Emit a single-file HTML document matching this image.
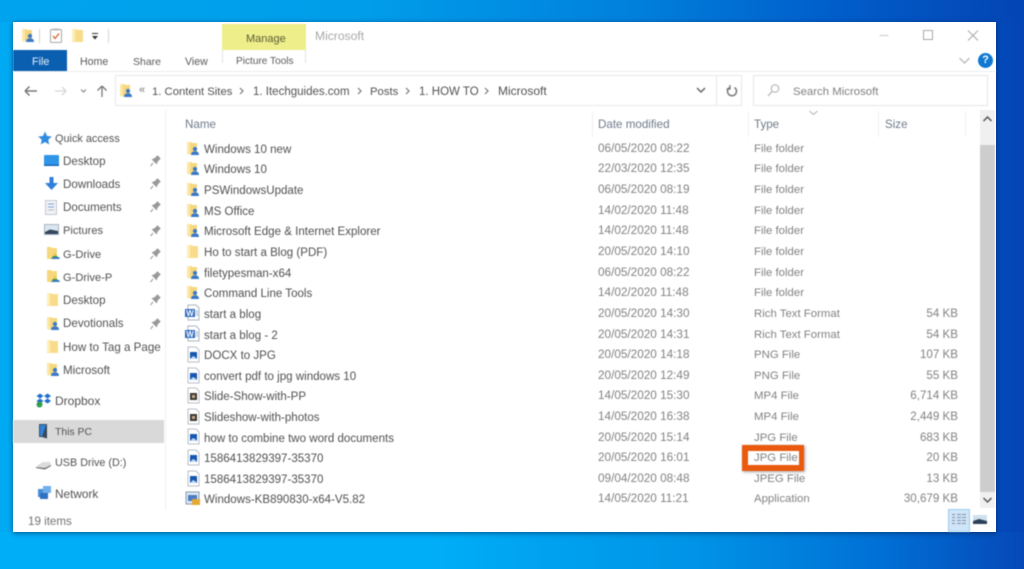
<!DOCTYPE html>
<html><head><meta charset="utf-8">
<style>
html,body{margin:0;padding:0}
body{width:1024px;height:569px;overflow:hidden;position:relative;font-family:"Liberation Sans",sans-serif;font-size:12px;
background:linear-gradient(90deg,#00aaf3 0%,#00a6ef 45%,#0087e2 72%,#0062ce 88%,#0444b4 100%)}
#bot{position:absolute;left:0;top:532px;width:1024px;height:37px;background:linear-gradient(90deg,#00aef7 0%,#00aef7 42%,#0093e6 68%,#0070d6 86%,#0648b8 100%)}
#top{position:absolute;left:0;top:0;width:1024px;height:22px;background:linear-gradient(90deg,#00a4ee 0%,#009eea 35%,#0080dc 62%,#0060cc 80%,#0444b4 100%)}
#win{position:absolute;left:13px;top:22px;width:983px;height:510px;background:#fff;box-shadow:0 1px 5px rgba(0,30,70,.6)}
.a{position:absolute;white-space:nowrap;line-height:14px}
.n{color:#505050;left:204px;font-size:11.55px;margin-top:1px}
.d{color:#828282;left:598px;font-size:11.75px}
.t{color:#828282;left:754px;font-size:11.4px}
.s{color:#828282;right:66px;font-size:11.6px;text-align:right}
.h{color:#6f7a8a;font-size:11.6px;top:118px}
.q{color:#525252;font-size:11.6px;margin-top:1px}
.r{color:#5a5a5a;font-size:10.5px;margin-top:1px}
svg.a{overflow:visible}
#txt{position:absolute;left:0;top:0;width:1024px;height:569px;filter:blur(.4px)}
</style></head><body>
<div id="top"></div><div id="bot"></div><div id="win"></div>
<svg width="0" height="0" style="position:absolute"><defs>
<g id="fu"><path d="M0 1h4l1 1h5v11H0z" fill="#f6d77e"/><path d="M0 1h3v13l-3-1z" fill="#fbe7a8"/><circle cx="8" cy="8" r="2.100" fill="#3a78c8"/><path d="M4 14c0-3 2-3.600 4-3.600s4 .6 4 3.600z" fill="#3a78c8"/></g>
<g id="fp"><path d="M0 1h4l1 1h6v12H0z" fill="#f8dc8c"/><path d="M0 1h3v13l-3-1z" fill="#fdeeb8"/></g>
<g id="fg"><path d="M0 1h4l1 1h5v11H0z" fill="#f6d77e"/><path d="M8 7l4 6H4z" fill="#3d9a4c"/><path d="M8 7l2 3H6z" fill="#f2c63d"/><path d="M5 13l2-2h5l1 2z" fill="#3a78c8"/></g>
<g id="rtf"><path d="M3 0h8l3 3v12H3z" fill="#fff" stroke="#aab4c2"/><rect x="0" y="4" width="10" height="8" fill="#2c69bc"/><text x="1.200" y="11" font-size="8" font-weight="bold" fill="#fff" font-family="Liberation Sans">W</text><path d="M11 6h2M11 8h2M11 10h2" stroke="#8fa7c8"/></g>
<g id="img"><path d="M1 0h8l3 3v12H1z" fill="#fff" stroke="#b8bec7"/><rect x="3" y="5" width="7" height="7" fill="#1656b0"/><path d="M3 12l3-3 2 1 2 2z" fill="#bcd8f4"/></g>
<g id="vid"><path d="M1 0h8l3 3v12H1z" fill="#fff" stroke="#b8bec7"/><rect x="3" y="5" width="7" height="7" fill="#3c3833"/><rect x="5" y="7" width="3" height="3" fill="#c9a98a"/></g>
<g id="pin"><path d="M3 8l-2.500 3M2.500 4.500l4 4 1-2.500L10 3.500 7.500 1 5 3.500z" fill="#999" stroke="#999"/></g>
</defs></svg>
<div id="txt">
<!-- ribbon -->
<div class="a" style="left:222px;top:24px;width:84px;height:26px;background:#eeee8a"></div>
<div class="a" style="left:222px;top:50px;width:84px;height:13px;border-left:1px solid #e2e2e2;border-right:1px solid #e2e2e2;box-sizing:border-box"></div>
<div class="a" style="left:13px;top:50px;width:54px;height:22px;background:#0a5fb0"></div>
<div class="a" style="left:13px;top:71px;width:983px;height:1px;background:#ececec"></div>
<svg class="a" style="left:22px;top:28px" width="15" height="15"><use href="#fu"/></svg>
<div class="a" style="left:39px;top:29px;width:1px;height:14px;background:#d4d4d4"></div>
<svg class="a" style="left:50px;top:28px" width="15" height="16"><rect x=".5" y="1.500" width="11" height="13" rx="1" fill="#fdfdfd" stroke="#a8a8a8"/><rect x="3" y=".5" width="6" height="2" fill="#bbb"/><path d="M3 8l2 2.500 4-5" fill="none" stroke="#d8622c" stroke-width="1.300"/></svg>
<svg class="a" style="left:72px;top:28px" width="12" height="15"><use href="#fp"/></svg>
<svg class="a" style="left:91px;top:33px" width="8" height="8"><path d="M1 .5h6" stroke="#333"/><path d="M1 3h6L4 6.500z" fill="#333"/></svg>
<div class="a" style="left:108px;top:29px;width:1px;height:14px;background:#d4d4d4"></div>
<div class="a" style="left:246px;top:32px;color:#5c5c36;font-size:11px">Manage</div>
<div class="a" style="left:315px;top:29px;color:#a8a8a8;font-size:12.1px">Microsoft</div>
<div class="a" style="left:32px;top:55px;color:#e6f0fa;font-size:10.8px">File</div>
<div class="a r" style="left:80px;top:54px;font-size:10.6px">Home</div>
<div class="a r" style="left:133px;top:54px">Share</div>
<div class="a r" style="left:185px;top:54px;font-size:10.6px">View</div>
<div class="a r" style="left:236px;top:54px;font-size:10.1px">Picture Tools</div>
<svg class="a" style="left:880px;top:28px" width="110" height="14"><path d="M-.5 7.500h9" stroke="#c8c8c8"/><rect x="43.500" y="2.500" width="9" height="9" fill="none" stroke="#a8a8a8"/><path d="M88 2.500l10 10M98 2.500l-10 10" stroke="#a8a8a8"/></svg>
<svg class="a" style="left:959px;top:57px" width="12" height="8"><path d="M.5 1l5 5 5-5" fill="none" stroke="#b0b0b0" stroke-width="1.200"/></svg>
<div class="a" style="left:978px;top:53px;width:15px;height:15px;border-radius:50%;background:#0f78d2;color:#fff;font-size:11px;line-height:15px;text-align:center;font-weight:bold">?</div>
<!-- nav -->
<svg class="a" style="left:24px;top:84px" width="90" height="14"><path d="M1 7h12M1 7l4.500-4.500M1 7l4.500 4.500" fill="none" stroke="#777" stroke-width="1.500"/><path d="M31 7h11M42 7l-4-4M42 7l-4 4" fill="none" stroke="#d6d6d6" stroke-width="1.300"/><path d="M57 5.500l2.500 2.500 2.500-2.500" fill="none" stroke="#888" stroke-width="1.200"/><path d="M78 13V2M78 2l-4.500 4.500M78 2l4.500 4.500" fill="none" stroke="#777" stroke-width="1.300"/></svg>
<div class="a" style="left:115px;top:75px;width:627px;height:31px;border:1px solid #eaeaea;box-sizing:border-box"></div>
<div class="a" style="left:716px;top:75px;width:1px;height:31px;background:#eaeaea"></div>
<svg class="a" style="left:120px;top:83px" width="15" height="15"><use href="#fu"/></svg>
<div class="a" style="left:139px;top:83px;color:#777;font-size:11px">«</div>
<div class="a q" style="left:152px;top:84px;font-size:11.3px">1. Content Sites</div>
<div class="a q" style="left:253px;top:84px;font-size:11.5px">1. Itechguides.com</div>
<div class="a q" style="left:370px;top:84px;font-size:11.3px">Posts</div>
<div class="a q" style="left:419px;top:84px;font-size:11.5px">1. HOW TO</div>
<div class="a q" style="left:498px;top:84px;font-size:12px;margin-top:0">Microsoft</div>
<svg class="a" style="left:240px;top:87px" width="300" height="9"><path d="M0 1l3 3-3 3" fill="none" stroke="#777" stroke-width="1.200"/><path d="M0 1l3 3-3 3" fill="none" stroke="#777" stroke-width="1.200" transform="translate(118,0)"/><path d="M0 1l3 3-3 3" fill="none" stroke="#777" stroke-width="1.200" transform="translate(166,0)"/><path d="M0 1l3 3-3 3" fill="none" stroke="#777" stroke-width="1.200" transform="translate(245,0)"/></svg>
<svg class="a" style="left:696px;top:87px" width="10" height="7"><path d="M1 1l4 4 4-4" fill="none" stroke="#666" stroke-width="1.500"/></svg>
<svg class="a" style="left:725px;top:84px" width="13" height="14"><path d="M9.500 3.500a4.500 4.500 0 1 1-5 0" fill="none" stroke="#777" stroke-width="1.500"/><path d="M4 1v4h-3.500" fill="none" stroke="#777" stroke-width="1.300" transform="translate(1,0)"/></svg>
<div class="a" style="left:753px;top:75px;width:235px;height:31px;border:1px solid #e6e6e6;box-sizing:border-box"></div>
<svg class="a" style="left:767px;top:84px" width="13" height="13"><circle cx="8" cy="4.500" r="3.800" fill="none" stroke="#aaa"/><path d="M5 7.500L1 12" stroke="#aaa"/></svg>
<div class="a" style="left:793px;top:85px;color:#808080;font-size:11.4px">Search Microsoft</div>
<!-- headers -->
<svg class="a" style="left:809px;top:110px" width="9" height="6"><path d="M.5 1l4 3.500 4-3.500" fill="none" stroke="#b0b0b0"/></svg>
<div class="a h" style="left:185px">Name</div>
<div class="a h" style="left:598px">Date modified</div>
<div class="a h" style="left:754px">Type</div>
<div class="a h" style="left:885px">Size</div>
<div class="a" style="left:592px;top:111px;width:1px;height:26px;background:#f0f0f0"></div>
<div class="a" style="left:748px;top:111px;width:1px;height:26px;background:#f0f0f0"></div>
<div class="a" style="left:878px;top:111px;width:1px;height:26px;background:#f0f0f0"></div>
<div class="a" style="left:965px;top:111px;width:1px;height:26px;background:#f0f0f0"></div>
<!-- sidebar -->
<div class="a" style="left:165px;top:110px;width:1px;height:400px;background:#f2f2f2"></div>
<div class="a" style="left:13px;top:420px;width:151px;height:23px;background:#d9d9d9"></div>
<svg class="a" style="left:38px;top:131px" width="14" height="14"><path d="M7 .5l2 4.500 4.800.5-3.600 3.200 1 4.800L7 11l-4.200 2.500 1-4.800L.2 5.500 5 5z" fill="#2f8ae0"/></svg>
<div class="a q" style="left:55px;top:131px;font-size:10.9px">Quick access</div>
<svg class="a" style="left:44px;top:155px" width="16" height="12"><rect width="15" height="11" rx="1" fill="#2f95e8"/><path d="M0 9.500h15V11H0z" fill="#1668c0"/></svg>
<div class="a q" style="left:63px;top:154px">Desktop</div>
<svg class="a" style="left:45px;top:177px" width="14" height="14"><path d="M4.500 0h4v6H13L6.500 13 0 6h4.500z" fill="#2f7fd8"/></svg>
<div class="a q" style="left:63px;top:177px">Downloads</div>
<svg class="a" style="left:45px;top:200px" width="13" height="15"><rect x=".5" y=".5" width="11" height="14" fill="#f0f2f5" stroke="#c4c8ce"/><path d="M3 4h6M3 7h6" stroke="#7da5d8"/><path d="M3 10h6" stroke="#bbb"/></svg>
<div class="a q" style="left:63px;top:200px">Documents</div>
<svg class="a" style="left:44px;top:224px" width="15" height="11"><rect x=".5" y=".5" width="14" height="10" fill="#dbe6f2" stroke="#a9b3c0"/><path d="M1 8l5-2.500 8 1.500V10H1z" fill="#33465c"/></svg>
<div class="a q" style="left:63px;top:223px;font-size:11.1px">Pictures</div>
<svg class="a" style="left:47px;top:246px" width="14" height="15"><use href="#fg"/></svg>
<div class="a q" style="left:63px;top:247px;font-size:11.1px">G-Drive</div>
<svg class="a" style="left:47px;top:269px" width="14" height="15"><use href="#fg"/></svg>
<div class="a q" style="left:63px;top:270px;font-size:11.1px">G-Drive-P</div>
<svg class="a" style="left:47px;top:292px" width="12" height="15"><use href="#fp"/></svg>
<div class="a q" style="left:63px;top:293px">Desktop</div>
<svg class="a" style="left:47px;top:316px" width="14" height="15"><use href="#fu"/></svg>
<div class="a q" style="left:63px;top:316px">Devotionals</div>
<svg class="a" style="left:47px;top:339px" width="12" height="15"><use href="#fp"/></svg>
<div class="a q" style="left:63px;top:340px;width:101px;overflow:hidden">How to Tag a Page on</div>
<svg class="a" style="left:47px;top:362px" width="14" height="15"><use href="#fu"/></svg>
<div class="a q" style="left:63px;top:363px">Microsoft</div>
<svg class="a" style="left:150px;top:155px" width="11" height="12"><use href="#pin"/></svg>
<svg class="a" style="left:150px;top:178px" width="11" height="12"><use href="#pin"/></svg>
<svg class="a" style="left:150px;top:201px" width="11" height="12"><use href="#pin"/></svg>
<svg class="a" style="left:150px;top:225px" width="11" height="12"><use href="#pin"/></svg>
<svg class="a" style="left:150px;top:248px" width="11" height="12"><use href="#pin"/></svg>
<svg class="a" style="left:150px;top:271px" width="11" height="12"><use href="#pin"/></svg>
<svg class="a" style="left:150px;top:294px" width="11" height="12"><use href="#pin"/></svg>
<svg class="a" style="left:150px;top:318px" width="11" height="12"><use href="#pin"/></svg>
<svg class="a" style="left:36px;top:393px" width="16" height="15"><path d="M4 .5L7.500 3 4 5.500.5 3zM11.500.5L15 3l-3.500 2.500L8 3zM4 5.500L7.500 8 4 10.500.500 8zM11.500 5.500L15 8l-3.500 2.500L8 8z" fill="#1e6fd0"/><circle cx="3.500" cy="11.500" r="3" fill="#2f9e4c"/></svg>
<div class="a q" style="left:55px;top:394px;font-size:12px;margin-top:0">Dropbox</div>
<svg class="a" style="left:39px;top:424px" width="10" height="15"><rect x=".5" y=".5" width="7" height="12" fill="#2f83d8" stroke="#3f5268"/><path d="M3 13l5 1.500V2l-1-1" fill="#35475c"/></svg>
<div class="a q" style="left:55px;top:425px;font-size:10.4px">This PC</div>
<svg class="a" style="left:36px;top:460px" width="16" height="10"><path d="M2 5l5-3h7l1 3-5 3-9-1z" fill="#dcdcdc"/><path d="M0 7l9 1 6-3v1L9 9.500 0 8z" fill="#6a6a6a"/></svg>
<div class="a q" style="left:55px;top:456px;font-size:10.8px;margin-top:0">USB Drive (D:)</div>
<svg class="a" style="left:37px;top:486px" width="15" height="14"><rect x="1" y="3" width="10" height="8" fill="#4a8ed8"/><rect x="6" y="0" width="8" height="7" fill="#6fb0ec"/><rect x="3" y="7" width="8" height="6" fill="#2f70c0"/></svg>
<div class="a q" style="left:55px;top:487px;font-size:11.8px;margin-top:0">Network</div>
<div class="a" style="left:28px;top:515px;color:#727272;font-size:11.6px">19 items</div>
<!-- rows -->
<svg class="a" style="left:187px;top:141px" width="14" height="15"><use href="#fu"/></svg>
<div class="a n" style="top:142px">Windows 10 new</div><div class="a d" style="top:142px">06/05/2020 08:22</div><div class="a t" style="top:142px">File folder</div>
<svg class="a" style="left:187px;top:161px" width="14" height="15"><use href="#fu"/></svg>
<div class="a n" style="top:162px">Windows 10</div><div class="a d" style="top:162px">22/03/2020 12:35</div><div class="a t" style="top:162px">File folder</div>
<svg class="a" style="left:187px;top:182px" width="14" height="15"><use href="#fu"/></svg>
<div class="a n" style="top:183px">PSWindowsUpdate</div><div class="a d" style="top:183px">06/05/2020 08:19</div><div class="a t" style="top:183px">File folder</div>
<svg class="a" style="left:187px;top:203px" width="14" height="15"><use href="#fu"/></svg>
<div class="a n" style="top:204px">MS Office</div><div class="a d" style="top:204px">14/02/2020 11:48</div><div class="a t" style="top:204px">File folder</div>
<svg class="a" style="left:187px;top:223px" width="14" height="15"><use href="#fu"/></svg>
<div class="a n" style="top:224px">Microsoft Edge &amp; Internet Explorer</div><div class="a d" style="top:224px">14/02/2020 11:48</div><div class="a t" style="top:224px">File folder</div>
<svg class="a" style="left:187px;top:244px" width="12" height="15"><use href="#fp"/></svg>
<div class="a n" style="top:245px">Ho to start a Blog (PDF)</div><div class="a d" style="top:245px">20/05/2020 14:10</div><div class="a t" style="top:245px">File folder</div>
<svg class="a" style="left:187px;top:265px" width="14" height="15"><use href="#fu"/></svg>
<div class="a n" style="top:266px">filetypesman-x64</div><div class="a d" style="top:266px">06/05/2020 08:22</div><div class="a t" style="top:266px">File folder</div>
<svg class="a" style="left:187px;top:285px" width="14" height="15"><use href="#fu"/></svg>
<div class="a n" style="top:286px">Command Line Tools</div><div class="a d" style="top:286px">14/02/2020 11:48</div><div class="a t" style="top:286px">File folder</div>
<svg class="a" style="left:185px;top:305px" width="15" height="16"><use href="#rtf"/></svg>
<div class="a n" style="top:307px">start a blog</div><div class="a d" style="top:307px">20/05/2020 14:30</div><div class="a t" style="top:307px">Rich Text Format</div><div class="a s" style="top:307px">54 KB</div>
<svg class="a" style="left:185px;top:326px" width="15" height="16"><use href="#rtf"/></svg>
<div class="a n" style="top:328px">start a blog - 2</div><div class="a d" style="top:328px">20/05/2020 14:31</div><div class="a t" style="top:328px">Rich Text Format</div><div class="a s" style="top:328px">54 KB</div>
<svg class="a" style="left:187px;top:347px" width="13" height="16"><use href="#img"/></svg>
<div class="a n" style="top:348px">DOCX to JPG</div><div class="a d" style="top:348px">20/05/2020 14:18</div><div class="a t" style="top:348px">PNG File</div><div class="a s" style="top:348px">107 KB</div>
<svg class="a" style="left:187px;top:368px" width="13" height="16"><use href="#img"/></svg>
<div class="a n" style="top:369px">convert pdf to jpg windows 10</div><div class="a d" style="top:369px">20/05/2020 12:49</div><div class="a t" style="top:369px">PNG File</div><div class="a s" style="top:369px">55 KB</div>
<svg class="a" style="left:187px;top:388px" width="13" height="16"><use href="#vid"/></svg>
<div class="a n" style="top:389px">Slide-Show-with-PP</div><div class="a d" style="top:389px">14/05/2020 15:30</div><div class="a t" style="top:389px">MP4 File</div><div class="a s" style="top:389px">6,714 KB</div>
<svg class="a" style="left:187px;top:409px" width="13" height="16"><use href="#vid"/></svg>
<div class="a n" style="top:410px">Slideshow-with-photos</div><div class="a d" style="top:410px">14/05/2020 16:38</div><div class="a t" style="top:410px">MP4 File</div><div class="a s" style="top:410px">2,449 KB</div>
<svg class="a" style="left:187px;top:429px" width="13" height="16"><use href="#img"/></svg>
<div class="a n" style="top:431px">how to combine two word documents</div><div class="a d" style="top:431px">20/05/2020 15:14</div><div class="a t" style="top:431px">JPG File</div><div class="a s" style="top:431px">683 KB</div>
<svg class="a" style="left:187px;top:450px" width="13" height="16"><use href="#img"/></svg>
<div class="a n" style="top:451px">1586413829397-35370</div><div class="a d" style="top:451px">20/05/2020 16:01</div><div class="a t" style="top:451px">JPG File</div><div class="a s" style="top:451px">20 KB</div>
<svg class="a" style="left:187px;top:471px" width="13" height="16"><use href="#img"/></svg>
<div class="a n" style="top:472px">1586413829397-35370</div><div class="a d" style="top:472px">09/04/2020 08:48</div><div class="a t" style="top:472px">JPEG File</div><div class="a s" style="top:472px">13 KB</div>
<svg class="a" style="left:185px;top:491px" width="16" height="16"><rect x="1" y="1" width="13" height="12" fill="#dfe8f2" stroke="#8a9ab0"/><rect x="3" y="4" width="9" height="6" fill="#4b7cc4"/><rect x="7" y="8" width="8" height="6" fill="#e4a935"/></svg>
<div class="a n" style="top:492px">Windows-KB890830-x64-V5.82</div><div class="a d" style="top:492px">14/05/2020 11:21</div><div class="a t" style="top:492px">Application</div><div class="a s" style="top:492px">30,679 KB</div>
<!-- highlight -->
<div class="a" style="left:742px;top:445px;width:62px;height:26px;border:6px solid #e95a0e;border-right-width:5px;box-sizing:border-box;box-shadow:1px 1px 3px rgba(0,0,0,.35)"></div>
<!-- scrollbar -->
<div class="a" style="left:980px;top:110px;width:15px;height:398px;background:#f0f0f0"></div>
<div class="a" style="left:980px;top:145px;width:15px;height:347px;background:#cdcdcd"></div>
<svg class="a" style="left:983px;top:116px" width="9" height="6"><path d="M.5 5l4-4 4 4" fill="none" stroke="#555" stroke-width="1.500"/></svg>
<svg class="a" style="left:983px;top:497px" width="9" height="6"><path d="M.5 1l4 4 4-4" fill="none" stroke="#555" stroke-width="1.500"/></svg>
<!-- view buttons -->
<div class="a" style="left:948px;top:509px;width:22px;height:23px;background:#cfe6f8;border:1px solid #9ccbee;box-sizing:border-box"></div>
<svg class="a" style="left:952px;top:513px" width="15" height="14"><path d="M0 1.500h3M5 1.500h4M10 1.500h4M0 4.500h3M5 4.500h4M10 4.500h4M0 7.500h3M5 7.500h4M10 7.500h4M0 10.500h3M5 10.500h4M10 10.500h4" stroke="#7f8da0"/></svg>
<svg class="a" style="left:973px;top:515px" width="15" height="10"><rect width="14" height="9" fill="#cfe0ef"/><path d="M0 6l6-2 8 2v3H0z" fill="#2c4058"/></svg>
</div>
</body></html>
